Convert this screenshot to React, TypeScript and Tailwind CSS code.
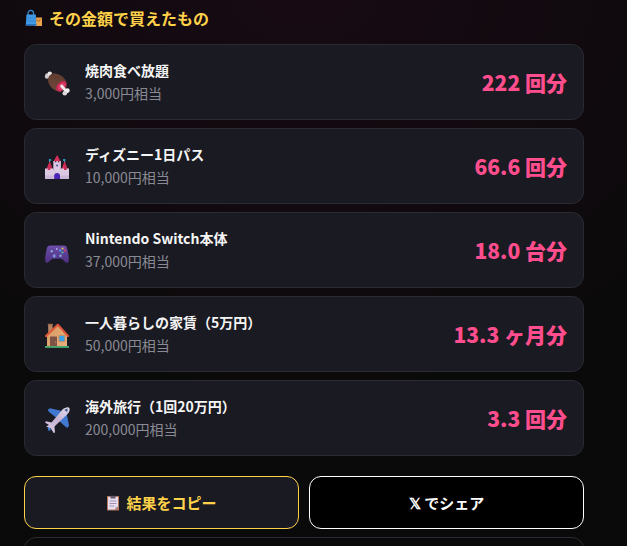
import type { ReactNode } from "react";

function MeatIcon() {
  return (
    <svg viewBox="0 0 32 32" className="size-8" aria-hidden="true">
      <defs>
        <linearGradient id="meat" x1="0" y1="0" x2="1" y2="1">
          <stop offset="0" stopColor="#5a3a2e" />
          <stop offset="1" stopColor="#74483a" />
        </linearGradient>
      </defs>
      <path d="M6 9 L11 13" stroke="#d6d0d4" strokeWidth="3.4" strokeLinecap="round" />
      <circle cx="6" cy="10.6" r="2.2" fill="#cfc9cd" />
      <circle cx="8.8" cy="7.6" r="2.2" fill="#ece8ea" />
      <ellipse cx="16.3" cy="16.4" rx="10.4" ry="7.8" transform="rotate(42 16.3 16.4)" fill="url(#meat)" />
      <ellipse cx="20.4" cy="20.3" rx="4.2" ry="6.4" transform="rotate(42 20.4 20.3)" fill="#c42a55" />
      <ellipse cx="20.6" cy="20.5" rx="2.6" ry="4.2" transform="rotate(42 20.6 20.5)" fill="#e0406c" />
      <path d="M20.6 20 L25.5 25.6" stroke="#eee9eb" strokeWidth="2.8" strokeLinecap="round" />
      <circle cx="26.4" cy="24.6" r="2.3" fill="#f3eff1" />
      <circle cx="23.8" cy="27.2" r="2.3" fill="#ddd7db" />
    </svg>
  );
}

function CastleIcon() {
  return (
    <svg viewBox="0 0 32 32" className="size-8" aria-hidden="true">
      <path d="M12.500 11.500 L16.100 5 L19.700 11.500z" fill="#d62f59" />
      <path d="M12.300 11h1.600v1.300h1.500V11h1.600v1.300h1.400V11h1.500v10h-7.600z" fill="#dcc7e3" />
      <path d="M5.200 20 L8.600 11 L12 20z M20.200 20 L23.600 11 L27 20z" fill="#d62f59" />
      <path d="M8.600 11 L12 20H9z M23.600 11 L27 20H24z" fill="#b8264d" />
      <path d="M8.600 9v3 M23.600 9v3" stroke="#7cbfd2" strokeWidth="0.8" />
      <path d="M7.800 9h2.400v2H7.800z M22 9h2.400v2H22z" fill="#2793b7" />
      <path d="M4 29V18.500h2.700V20h2.500v-1.500h3V20h2.600v-1.500h2.600V20H20v-1.500h3V20h2.500v-1.500H28V29z" fill="#dcc9e2" />
      <path d="M4 25.500h24V29H4z" fill="#cdb7d8" />
      <path d="M13.200 29v-3a2.900 2.900 0 0 1 5.800 0v3z" fill="#4927b4" />
      <circle cx="16.100" cy="15.500" r="1" fill="#5b4a9c" />
    </svg>
  );
}

function GamepadIcon() {
  return (
    <svg viewBox="0 0 32 32" className="size-8" aria-hidden="true">
      <defs>
        <linearGradient id="pad" x1="0" y1="0" x2="0" y2="1">
          <stop offset="0" stopColor="#6e4eaa" />
          <stop offset="1" stopColor="#4c2f81" />
        </linearGradient>
      </defs>
      <path d="M9 11.500C6 11.600 6 14 5.200 17.500C4.300 21.500 3.500 27 5 28.500C7.200 30.500 9.200 25.500 12 24.800H20C22.800 25.500 24.800 30.500 27 28.500C28.500 27 27.700 21.500 26.800 17.500C26 14 26 11.600 23 11.500Z" fill="url(#pad)" />
      <circle cx="10.700" cy="17.500" r="2.300" fill="#5a3f90" />
      <circle cx="10.700" cy="17.300" r="1.200" fill="#8ba7dd" />
      <circle cx="19.500" cy="22" r="2.100" fill="#5a3f90" />
      <circle cx="19.500" cy="21.800" r="1.200" fill="#8ba7dd" />
      <path d="M13.300 20v4M11.300 22h4" stroke="#7f9de2" strokeWidth="1.200" />
      <circle cx="21.500" cy="14.500" r="1.100" fill="#e5c34c" />
      <circle cx="24" cy="16.500" r="1.100" fill="#ea435b" />
      <circle cx="21.500" cy="18.500" r="1.100" fill="#45c5a6" />
      <circle cx="19.200" cy="16.500" r="1.100" fill="#4ab1ed" />
      <circle cx="15.800" cy="15" r="0.900" fill="#b8a7df" />
    </svg>
  );
}

function HouseIcon() {
  return (
    <svg viewBox="0 0 32 32" className="size-8" aria-hidden="true">
      <defs>
        <linearGradient id="wall" x1="0" y1="0" x2="1" y2="1">
          <stop offset="0" stopColor="#d99961" />
          <stop offset="1" stopColor="#e7b181" />
        </linearGradient>
      </defs>
      <path d="M7.200 6.500h4.300v10H7.200z" fill="#b98763" />
      <path d="M6.800 5.800h5v1.800h-5z" fill="#a76e4c" />
      <path d="M6 17 L17 7 L26 17V29H6z" fill="url(#wall)" />
      <path d="M5 18 L16.800 6.800 L27 18" fill="none" stroke="#df5737" strokeWidth="2.100" strokeLinejoin="round" strokeLinecap="round" />
      <path d="M9 18.500h7V29H9z" fill="#7e5346" />
      <circle cx="14.700" cy="24" r="0.600" fill="#d9aa71" />
      <path d="M18 17.500h5.800v6H18z" fill="#37a4ec" stroke="#c38a5c" strokeWidth="0.800" />
      <path d="M4 28h24v1.900H4z" fill="#49a96b" />
    </svg>
  );
}

function PlaneIcon() {
  return (
    <svg viewBox="0 0 32 32" className="size-8" aria-hidden="true">
      <defs>
        <linearGradient id="hull" x1="1" y1="0" x2="0" y2="1">
          <stop offset="0" stopColor="#e3dcf0" />
          <stop offset="0.500" stopColor="#c5b1d0" />
          <stop offset="1" stopColor="#ddd0e8" />
        </linearGradient>
      </defs>
      <path d="M7 7.500L9 6.200L21 9L15 15.500L7.500 9.500Z M25.500 10.500L28 23.500L26.500 26L24.500 24.800L17 18Z" fill="#4078d0" />
      <path d="M6.500 26L7.800 29L9.500 28.500V24Z M4.500 23L7 24.500" fill="#417cd8" />
      <path d="M4 20.500L5 19.200L10.500 20.500L21.500 7.500C23.500 5.500 27 4.500 28.200 5.700C29.300 7 28.500 10 26.500 12L13.500 24.500L14 30.500L12.700 31L9.500 26L5 24.500L8 23Z" fill="url(#hull)" />
      <path d="M23.800 8.200L26 7.400L25.700 9.700" fill="none" stroke="#354f79" strokeWidth="1.100" />
    </svg>
  );
}

function BagsIcon() {
  return (
    <svg viewBox="0 0 18 18" className="size-[18px]" aria-hidden="true">
      <path d="M10.500 8.500h7.500v8.500h-7.500z" fill="#eba34c" />
      <path d="M12.800 10c0 3 3.300 3 3.300 0" fill="none" stroke="#a65c2a" strokeWidth="0.900" />
      <path d="M4 7V4.500c0-4.300 5.600-4.300 5.600 0V7" fill="none" stroke="#318cd4" strokeWidth="1.200" />
      <path d="M2.500 5.500h9.300L12.500 16.500H1.800z" fill="#449be5" />
      <path d="M2.200 9h9.800M2 12h10" stroke="#2f82cf" strokeWidth="0.800" />
      <path d="M1.900 15h10.500V16.500H1.800z" fill="#2773bd" />
    </svg>
  );
}

function ClipboardIcon() {
  return (
    <svg viewBox="0 0 14 16" className="h-4 w-3.5" aria-hidden="true">
      <path d="M1 1h12v14.500H1z" fill="#b4765f" />
      <path d="M2 2h10v9.500L9 14.500H2z" fill="#e9deee" />
      <path d="M12 11.500H9v3z" fill="#c3aed0" />
      <path d="M4.500 0.800h5v2.700h-5z" fill="#625b70" />
      <path d="M3.500 6h7M3.500 8.500h7M3.500 11h4.500" stroke="#9788aa" strokeWidth="0.900" />
    </svg>
  );
}

type Item = { icon: ReactNode; name: string; price: string; amount: string };

const items: Item[] = [
  { icon: <MeatIcon />, name: "焼肉食べ放題", price: "3,000円相当", amount: "222 回分" },
  { icon: <CastleIcon />, name: "ディズニー1日パス", price: "10,000円相当", amount: "66.6 回分" },
  { icon: <GamepadIcon />, name: "Nintendo Switch本体", price: "37,000円相当", amount: "18.0 台分" },
  { icon: <HouseIcon />, name: "一人暮らしの家賃（5万円）", price: "50,000円相当", amount: "13.3 ヶ月分" },
  { icon: <PlaneIcon />, name: "海外旅行（1回20万円）", price: "200,000円相当", amount: "3.3 回分" },
];

export default function App() {
  return (
    <div
      lang="ja"
      className="h-screen overflow-hidden bg-[#0a0a0a] bg-[radial-gradient(ellipse_540px_440px_at_304px_-20px,#180a14,#0a0a0a)] font-['Noto_Sans_CJK_JP',sans-serif] text-[#f5f5f5]"
    >
      <main className="max-w-[608px] px-6 pt-1.5">
        <h2 className="mb-3.5 flex items-center gap-[7px] text-base leading-6 font-bold text-[#ffd24a]">
          <BagsIcon />
          その金額で買えたもの
        </h2>

        <ul className="flex flex-col gap-2">
          {items.map((item) => (
            <li
              key={item.name}
              className="flex items-center gap-3 rounded-xl border border-[#2a2a33] bg-[#1a1a22] px-4 py-3.5"
            >
              {item.icon}
              <div className="min-w-0 flex-1 text-sm leading-[23px]">
                <p className="font-bold">{item.name}</p>
                <p className="text-[#8a8a94]">{item.price}</p>
              </div>
              <p className="text-[21px] leading-[31px] font-black whitespace-nowrap text-[#ff4d8d]">{item.amount}</p>
            </li>
          ))}
        </ul>

        <div className="mt-5 grid grid-cols-2 gap-2.5 text-[15px] leading-[23px] font-bold">
          <button
            type="button"
            className="flex items-center justify-center gap-1.5 rounded-xl border border-[#ffd24a] bg-[#1a1a22] py-3.5 text-[#ffd24a]"
          >
            <ClipboardIcon />
            結果をコピー
          </button>
          <button
            type="button"
            className="rounded-xl border border-white bg-black py-3.5 font-['Noto_Sans_CJK_JP','DejaVu_Serif',sans-serif] text-white"
          >
            𝕏 でシェア
          </button>
        </div>

        <div className="mt-2 h-14 rounded-xl border border-[#2a2a33]" />
      </main>
    </div>
  );
}
